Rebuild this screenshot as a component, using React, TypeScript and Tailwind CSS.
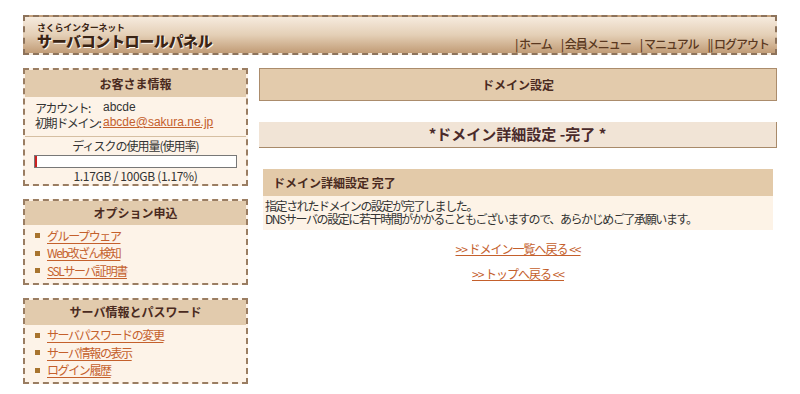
const jp = { fontFamily: '"Noto Sans CJK JP", "Liberation Sans", sans-serif' };
const latin = { fontFamily: '"Liberation Sans", Arial, sans-serif' };

function SideBox({ title, head, children }: { title: string; head: string; children: React.ReactNode }) {
  return (
    <div className="border-2 border-dashed border-[#9a7d62] bg-[#fdf3e8]">
      <div className={`${head} flex items-center justify-center bg-[#e2cbad] text-[12px] font-bold text-[#4a2a1e]`}>
        {title}
      </div>
      {children}
    </div>
  );
}

function LinkList({ items }: { items: string[] }) {
  return (
    <ul className="pt-[2px] pb-[3px]">
      {items.map((t) => (
        <li key={t} className="h-[17.5px] flex items-center pl-[10px] text-[12px] leading-[14px]">
          <span className="w-[5px] h-[5px] bg-[#a8742e] mr-[7px]" />
          <a className="text-[#c4602c] underline underline-offset-2 tracking-[-1.4px]">{t}</a>
        </li>
      ))}
    </ul>
  );
}

export default function App() {
  return (
    <div className="w-[800px] h-[394px] bg-white overflow-hidden pt-[15px] px-[23px] text-[#333]" style={jp}>
      {/* Header */}
      <div className="h-[40px] border-2 border-dashed border-[#8d735b] bg-gradient-to-b from-[#f6ebde] via-[#e4cfb6] to-[#c19c76] flex items-end justify-between pl-[12px] pr-[6px] pb-[1px]">
        <div className="self-center leading-none pt-[2px]">
          <div className="text-[9px] leading-[10px] font-bold text-[#3a2414] tracking-tight">さくらインターネット</div>
          <div className="text-[15px] leading-[16px] font-black text-[#3a2414] tracking-tight [text-shadow:1px_1px_0_#fff8ee]">
            サーバコントロールパネル
          </div>
        </div>
        <div className="text-[12px] leading-[16px] font-medium text-[#5a3820] flex gap-[9px] tracking-[-1px]">
          <span>| ホーム</span>
          <span>| 会員メニュー</span>
          <span>| マニュアル</span>
          <span>|| ログアウト</span>
        </div>
      </div>

      <div className="flex gap-[11px] mt-[13px]">
        {/* Sidebar */}
        <div className="w-[225px] flex flex-col gap-[13px] shrink-0">
          <SideBox title="お客さま情報" head="h-[27px]">
            <div className="h-[40px] px-[10px] pt-[3px] text-[12px] leading-[15px] border-b border-[#d6bfa2]">
              <div className="flex items-center h-[15px]">
                <span className="w-[68px] whitespace-nowrap tracking-[-1.4px]">アカウント:</span>
                <span style={latin} className="text-[12px]">abcde</span>
              </div>
              <div className="flex items-center h-[15px]">
                <span className="w-[68px] whitespace-nowrap tracking-[-1.4px]">初期ドメイン:</span>
                <a style={latin} className="text-[12px] text-[#c4602c] underline">abcde@sakura.ne.jp</a>
              </div>
            </div>
            <div className="h-[47px] px-[9px] pt-[2px] text-center text-[12px] leading-[14px]">
              <div className="tracking-[-1px]">ディスクの使用量(使用率)</div>
              <div className="h-[13px] border border-[#777] bg-white mt-[2px] flex">
                <span className="w-[2px] bg-[#cc2020]" />
              </div>
              <div className="mt-[1px] tracking-tight">1.17GB / 100GB (1.17%)</div>
            </div>
          </SideBox>
          <SideBox title="オプション申込" head="h-[24px]">
            <LinkList items={['グループウェア', 'Web改ざん検知', 'SSLサーバ証明書']} />
          </SideBox>
          <SideBox title="サーバ情報とパスワード" head="h-[25px]">
            <LinkList items={['サーバパスワードの変更', 'サーバ情報の表示', 'ログイン履歴']} />
          </SideBox>
        </div>

        {/* Main */}
        <div className="flex-1">
          <div className="h-[33px] border border-[#ab8c6c] bg-[#e3cbac] flex items-center justify-center text-[12px] font-bold text-[#4a2a1e]">
            ドメイン設定
          </div>
          <div className="mt-[21px] h-[26px] bg-[#f1e4d6] border-b border-r border-[#a88a6a] flex items-center justify-center text-[15px] font-bold text-[#4a2a2a]">
            *ドメイン詳細設定 -完了 *
          </div>
          <div className="mt-[21px] mx-[4px]">
            <div className="h-[27px] bg-[#e3caa9] flex items-center px-[10px] text-[12px] font-bold text-[#4a2a1e]">
              ドメイン詳細設定 完了
            </div>
            <div className="bg-[#fdf3e7] px-[2px] pt-[3px] pb-[5px] text-[12px] leading-[13px] text-[#333] tracking-[-1.4px]">
              <div>指定されたドメインの設定が完了しました。</div>
              <div>DNSサーバの設定に若干時間がかかることもございますので、あらかじめご了承願います。</div>
            </div>
          </div>
          <div className="flex flex-col items-center mt-[11px] gap-[9px] text-[12px] leading-[16px] tracking-[-1px]">
            <a className="text-[#c4602c] underline">&gt;&gt; ドメイン一覧へ戻る &lt;&lt;</a>
            <a className="text-[#c4602c] underline">&gt;&gt; トップへ戻る &lt;&lt;</a>
          </div>
        </div>
      </div>
    </div>
  );
}
